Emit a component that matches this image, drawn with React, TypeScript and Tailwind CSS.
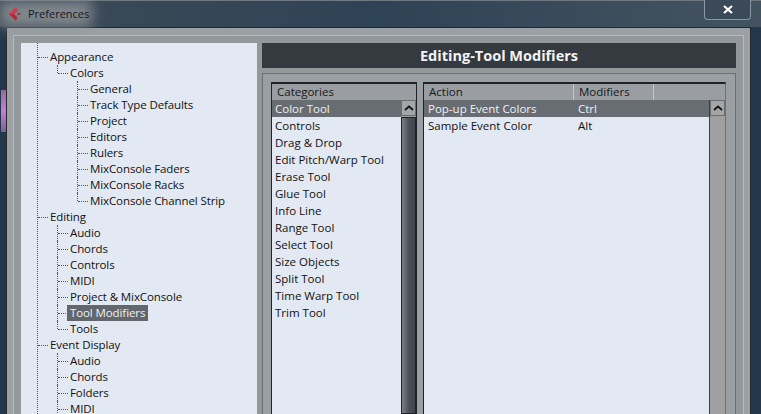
const font = { fontFamily: '"Open Sans", "Noto Sans", sans-serif' };

type Row = { t: string; l: number; sel?: boolean; v: [number, "full" | "half"][] };
const tree: Row[] = [
  { t: "Appearance", l: 0, v: [] },
  { t: "Colors", l: 1, v: [[57, "half"]] },
  { t: "General", l: 2, v: [[77, "full"]] },
  { t: "Track Type Defaults", l: 2, v: [[77, "full"]] },
  { t: "Project", l: 2, v: [[77, "full"]] },
  { t: "Editors", l: 2, v: [[77, "full"]] },
  { t: "Rulers", l: 2, v: [[77, "full"]] },
  { t: "MixConsole Faders", l: 2, v: [[77, "full"]] },
  { t: "MixConsole Racks", l: 2, v: [[77, "full"]] },
  { t: "MixConsole Channel Strip", l: 2, v: [[77, "half"]] },
  { t: "Editing", l: 0, v: [] },
  { t: "Audio", l: 1, v: [[57, "full"]] },
  { t: "Chords", l: 1, v: [[57, "full"]] },
  { t: "Controls", l: 1, v: [[57, "full"]] },
  { t: "MIDI", l: 1, v: [[57, "full"]] },
  { t: "Project & MixConsole", l: 1, v: [[57, "full"]] },
  { t: "Tool Modifiers", l: 1, sel: true, v: [[57, "full"]] },
  { t: "Tools", l: 1, v: [[57, "half"]] },
  { t: "Event Display", l: 0, v: [] },
  { t: "Audio", l: 1, v: [[57, "full"]] },
  { t: "Chords", l: 1, v: [[57, "full"]] },
  { t: "Folders", l: 1, v: [[57, "full"]] },
  { t: "MIDI", l: 1, v: [[57, "full"]] },
];

const cats = ["Color Tool", "Controls", "Drag & Drop", "Edit Pitch/Warp Tool", "Erase Tool", "Glue Tool", "Info Line", "Range Tool", "Select Tool", "Size Objects", "Split Tool", "Time Warp Tool", "Trim Tool"];

function TreeRow({ r }: { r: Row }) {
  const textLeft = 29 + r.l * 20;
  return (
    <div className="relative h-4 shrink-0 flex items-center" style={{ paddingLeft: textLeft - 3 }}>
      {r.v.map(([x, k]) => (
        <span
          key={x}
          className={`absolute top-0 border-l border-dotted border-[#555] ${k === "half" ? "h-2" : "h-4"}`}
          style={{ left: x - 21 }}
        />
      ))}
      <span className="absolute top-2 border-t border-dotted border-[#555]" style={{ left: 16 + r.l * 20 + 1, width: 10 }} />
      <span className={`relative px-[3px] h-4 leading-4 tracking-[-0.1px] ${r.sel ? "bg-[#62676d] text-[#f0f0f0]" : "text-[#111]"}`}>{r.t}</span>
    </div>
  );
}

function UpBtn() {
  return (
    <div className="h-[16px] shrink-0 bg-[#a3a5a7] border border-[#6a6d70] flex items-center justify-center">
      <svg width="10" height="6" viewBox="0 0 10 6"><path d="M1 5 L5 1.5 L9 5" fill="none" stroke="#111" strokeWidth="1.7" /></svg>
    </div>
  );
}

function Thumb() {
  return <div className="flex-1 mt-px border border-[#222] bg-gradient-to-r from-[#7c8085] via-[#4d5258] to-[#3f444a]" />;
}

export default function App() {
  return (
    <div className="w-[761px] h-[414px] overflow-hidden relative flex flex-col bg-[#22374c] text-[11.5px]" style={font}>
      {/* title bar */}
      <div className="h-[27px] shrink-0 relative flex items-center border-t border-[#6d7880] bg-gradient-to-r from-[#3d4a56] via-[#2f4356] to-[#445360]">
        <div className="absolute left-0 top-0 w-[92px] h-[26px] bg-[#8e9398] blur-[7px] opacity-85" />
        <svg className="relative ml-[8px]" width="15" height="16" viewBox="0 0 15 16">
          <path d="M8 1 L1 8 L8 15 L9.5 11.5 L6 8 L9.5 4.5 Z" fill="#b8263c" />
          <path d="M8 1 L1 8 L5 8 L9.5 4.5 Z" fill="#d0404f" />
          <path d="M9.5 6.5 L13.5 7.8 L9.5 9.5 Z" fill="#b5223a" />
        </svg>
        <span className="relative ml-[5px] text-[11px] text-[#15181b]">Preferences</span>
        <div className="absolute left-[704px] -top-px w-[47px] h-[20px] border border-t-0 border-[#8d979f] rounded-b-[4px] bg-[#3a4a58] flex items-center justify-center">
          <svg width="10" height="9" viewBox="0 0 10 9"><path d="M1 1 L9 8 M9 1 L1 8" stroke="#fff" strokeWidth="2.2" /></svg>
        </div>
      </div>

      {/* body */}
      <div className="flex-1 min-h-0 flex pl-[6px] pr-[10px]">
        <div className="flex-1 min-w-0 border-l border-t border-r border-[#24282c] rounded-t-[2px] bg-[#9ba0a4] pl-[6px] pr-[6px] pt-[7px] flex flex-col">
          <div className="flex-1 min-h-0 border-l border-t border-r border-[#b9bcbe] bg-[#94989b] pl-[7px] pr-[7px] pt-[7px] flex gap-[5px]">
            {/* tree */}
            <div className="w-[236px] shrink-0 relative bg-[#e3e9f2] pt-[6px] flex flex-col overflow-hidden">
              <span className="absolute left-[16px] top-0 h-full border-l border-dotted border-[#555]" />
              {tree.map((r, i) => <TreeRow key={i} r={r} />)}
            </div>
            {/* right */}
            <div className="flex-1 min-w-0 flex flex-col">
              <div className="h-[25px] shrink-0 bg-[#353a40] flex items-center justify-center text-[#f2f2f2] text-[14.5px] font-bold">Editing-Tool Modifiers</div>
              <div className="flex-1 min-h-0 mt-[5px] border-l border-t border-r border-[#6b6f73] bg-[#9a9fa3] pl-[8px] pr-[9px] pt-[8px] flex gap-[6px]">
                {/* categories */}
                <div className="w-[146px] shrink-0 border-x border-t-2 border-[#1f2226] flex flex-col min-h-0">
                  <div className="h-[16px] shrink-0 bg-[#9a9ea2] pl-[5px] leading-[15px] text-[#16181b]">Categories</div>
                  <div className="flex-1 min-h-0 flex">
                    <div className="flex-1 min-w-0 bg-[#e3e9f2] flex flex-col">
                      {cats.map((c, i) => (
                        <div key={c} className={`h-[17px] shrink-0 pl-[3px] leading-[17px] ${i === 0 ? "bg-[#686d73] text-[#f0f0f0]" : "text-[#111]"}`}>{c}</div>
                      ))}
                    </div>
                    <div className="w-[15px] shrink-0 bg-[#9a9ea2] flex flex-col">
                      <UpBtn />
                      <Thumb />
                    </div>
                  </div>
                </div>
                {/* actions */}
                <div className="flex-1 min-w-0 border-l border-t-2 border-r border-l-[#1f2226] border-t-[#1f2226] border-r-[#6d7073] flex flex-col min-h-0">
                  <div className="h-[16px] shrink-0 bg-[#9a9ea2] flex leading-[15px] text-[#16181b]">
                    <div className="w-[150px] pl-[5px] border-r border-[#c2c4c6]">Action</div>
                    <div className="w-[80px] pl-[5px] border-r border-[#c2c4c6]">Modifiers</div>
                  </div>
                  <div className="flex-1 min-h-0 flex">
                    <div className="flex-1 min-w-0 bg-[#e3e9f2] flex flex-col border-r border-[#3c3f42]">
                      <div className="h-[17px] flex leading-[17px] bg-[#686d73] text-[#f0f0f0]">
                        <div className="w-[150px] pl-[4px]">Pop-up Event Colors</div>
                        <div className="pl-[4px]">Ctrl</div>
                      </div>
                      <div className="h-[17px] flex leading-[17px] text-[#111]">
                        <div className="w-[150px] pl-[4px]">Sample Event Color</div>
                        <div className="pl-[4px]">Alt</div>
                      </div>
                    </div>
                    <div className="w-[15px] shrink-0 bg-[#9f9f9f] flex flex-col">
                      <UpBtn />
                      <div className="flex-1 mt-px bg-[#a0a0a0]" />
                    </div>
                  </div>
                </div>
              </div>
            </div>
          </div>
        </div>
      </div>
      {/* desktop tint behind the window */}
      <div className="absolute left-[1px] top-[90px] w-[5px] h-[42px] bg-gradient-to-b from-[#8d6aa0] via-[#c77fd6] to-[#7d5f96]" />
    </div>
  );
}
